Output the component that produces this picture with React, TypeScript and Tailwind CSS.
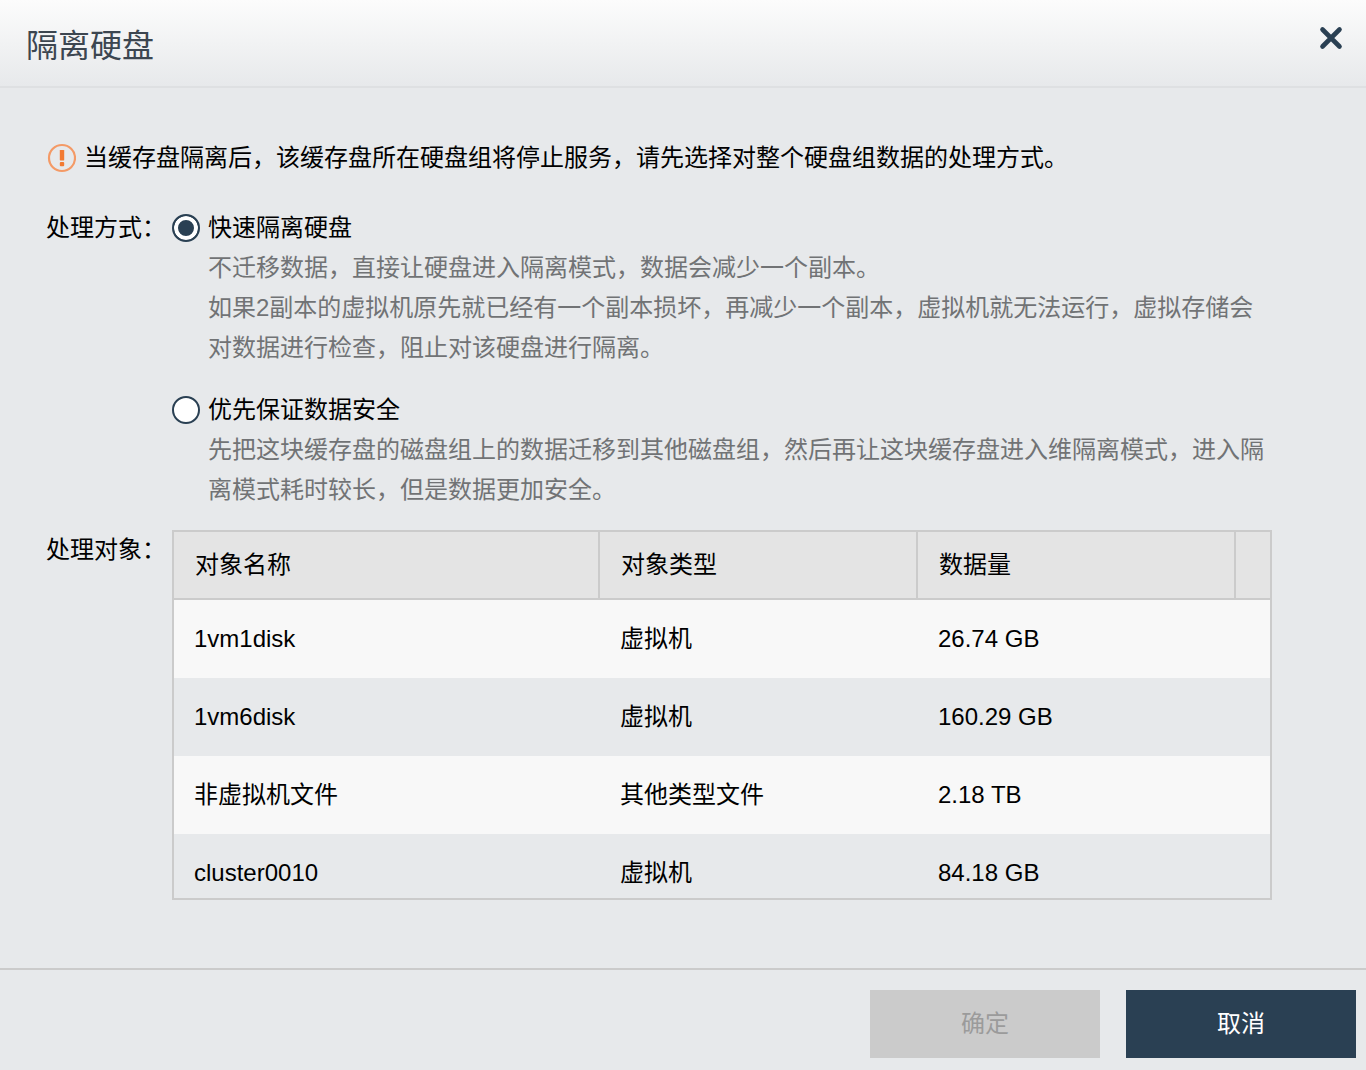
import React, { useState } from 'react';

const options = [
  {
    id: 'fast',
    title: '快速隔离硬盘',
    desc: [
      '不迁移数据，直接让硬盘进入隔离模式，数据会减少一个副本。',
      '如果2副本的虚拟机原先就已经有一个副本损坏，再减少一个副本，虚拟机就无法运行，虚拟存储会对数据进行检查，阻止对该硬盘进行隔离。',
    ],
  },
  {
    id: 'safe',
    title: '优先保证数据安全',
    desc: [
      '先把这块缓存盘的磁盘组上的数据迁移到其他磁盘组，然后再让这块缓存盘进入维隔离模式，进入隔离模式耗时较长，但是数据更加安全。',
    ],
  },
];

const rows = [
  { name: '1vm1disk', type: '虚拟机', size: '26.74 GB' },
  { name: '1vm6disk', type: '虚拟机', size: '160.29 GB' },
  { name: '非虚拟机文件', type: '其他类型文件', size: '2.18 TB' },
  { name: 'cluster0010', type: '虚拟机', size: '84.18 GB' },
];

function WarnIcon() {
  return (
    <svg width="30" height="30" viewBox="0 0 30 30" className="shrink-0" aria-hidden="true">
      <circle cx="16" cy="15" r="13" fill="none" stroke="#f49a66" strokeWidth="2.2" />
      <rect x="13.8" y="7" width="4.4" height="10.4" rx="0.6" fill="#f27a32" />
      <rect x="13.8" y="19" width="4.4" height="4.2" rx="1" fill="#f27a32" />
    </svg>
  );
}

function CloseIcon() {
  return (
    <svg width="24" height="24" viewBox="0 0 24 24" aria-hidden="true">
      <path d="M3.5 3.5 20.5 20.5M20.5 3.5 3.5 20.5" stroke="#2a4053" strokeWidth="4.6" strokeLinecap="round" />
    </svg>
  );
}

function ObjectTable() {
  const th =
    'sticky top-0 h-[68px] border-b-2 border-[#cbcbcb] bg-[#e4e4e4] px-[21px] text-left font-normal';
  return (
    <div className="h-[370px] overflow-y-auto border-2 border-[#cbcbcb] [scrollbar-width:none]">
      <table className="w-full table-fixed border-separate border-spacing-0" aria-labelledby="target-label">
        <colgroup>
          <col />
          <col className="w-[318px]" />
          <col className="w-[318px]" />
          <col className="w-[34px]" />
        </colgroup>
        <thead>
          <tr>
            <th className={`${th} border-r-2`}>对象名称</th>
            <th className={`${th} border-r-2`}>对象类型</th>
            <th className={`${th} border-r-2`}>数据量</th>
            <td className="sticky top-0 h-[68px] border-b-2 border-[#cbcbcb] bg-[#e4e4e4]" />
          </tr>
        </thead>
        <tbody>
          {rows.map((row) => (
            <tr key={row.name} className="odd:bg-[#f8f8f8]">
              <td className="h-[78px] px-5">{row.name}</td>
              <td className="h-[78px] px-5">{row.type}</td>
              <td className="h-[78px] px-5">{row.size}</td>
              <td />
            </tr>
          ))}
        </tbody>
      </table>
    </div>
  );
}

export default function App() {
  const [mode, setMode] = useState('fast');

  return (
    <div
      lang="zh-CN"
      className="flex min-h-screen flex-col bg-[#e7e9eb] font-['Liberation_Sans','Noto_Sans_CJK_SC',sans-serif] text-2xl leading-10 text-black"
    >
      <header className="flex items-start justify-between border-b-2 border-[#dee0e2] bg-linear-to-b from-[#fcfcfc] to-[#e7e9eb] pt-[26px] pr-[23px] pb-5 pl-[26px]">
        <h1 className="text-[32px] leading-10 text-[#3c4650]">隔离硬盘</h1>
        <button type="button" aria-label="关闭" className="cursor-pointer">
          <CloseIcon />
        </button>
      </header>

      <main className="grow pt-[50px] pr-[94px] pb-[68px] pl-[46px]">
        <p className="flex items-center gap-2">
          <WarnIcon />
          当缓存盘隔离后，该缓存盘所在硬盘组将停止服务，请先选择对整个硬盘组数据的处理方式。
        </p>

        <section className="mt-[30px] flex gap-[6px]">
          <div id="mode-label" className="w-[120px] shrink-0">
            处理方式：
          </div>
          <div role="radiogroup" aria-labelledby="mode-label" className="grid grow gap-[22px]">
            {options.map((opt) => (
              <div key={opt.id}>
                <label className="flex items-center gap-2">
                  <input
                    type="radio"
                    name="mode"
                    value={opt.id}
                    checked={mode === opt.id}
                    onChange={() => setMode(opt.id)}
                    className="size-7 shrink-0 appearance-none rounded-full border-2 border-[#2a4053] bg-white checked:bg-[#2a4053] checked:inset-ring-4 checked:inset-ring-white"
                  />
                  {opt.title}
                </label>
                <div className="pl-9 text-[#717375]">
                  {opt.desc.map((text) => (
                    <p key={text}>{text}</p>
                  ))}
                </div>
              </div>
            ))}
          </div>
        </section>

        <section className="mt-5 flex gap-[6px]">
          <div id="target-label" className="w-[120px] shrink-0">
            处理对象：
          </div>
          <div className="grow">
            <ObjectTable />
          </div>
        </section>
      </main>

      <footer className="flex justify-end gap-[26px] border-t-2 border-[#cbcbcb] pt-5 pr-[10px] pb-3">
        <button type="button" disabled className="h-[68px] w-[230px] bg-[#cbcbcb] text-[#9b9b9b]">
          确定
        </button>
        <button type="button" className="h-[68px] w-[230px] cursor-pointer bg-[#2a4053] text-white">
          取消
        </button>
      </footer>
    </div>
  );
}
